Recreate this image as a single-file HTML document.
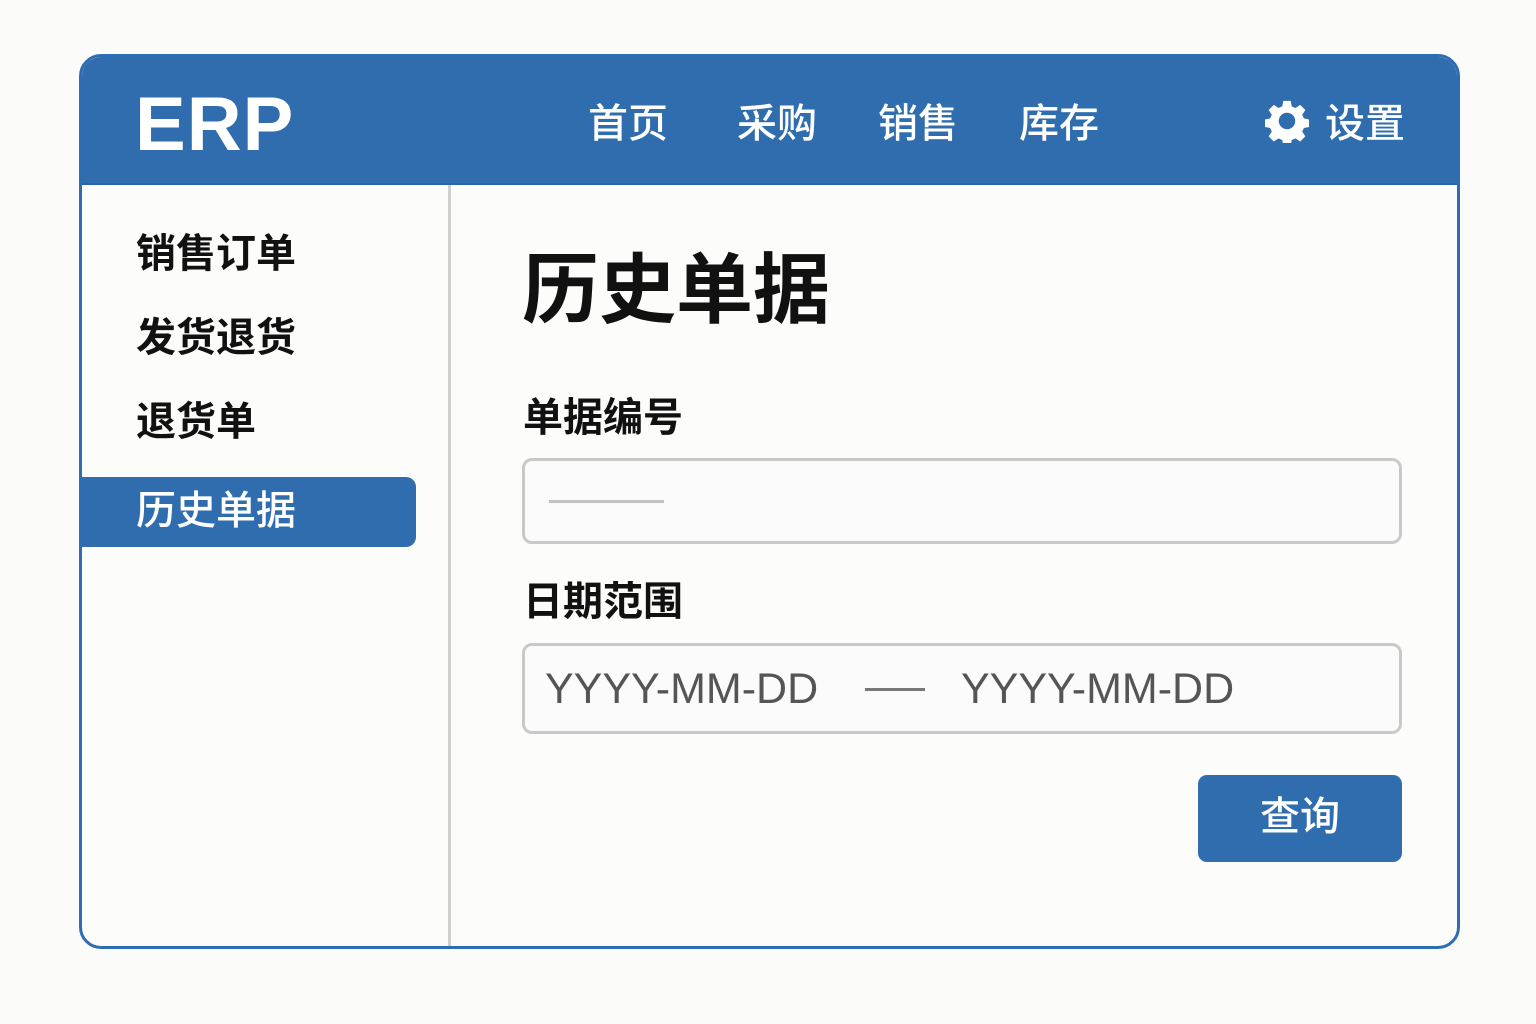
<!DOCTYPE html>
<html><head><meta charset="utf-8"><style>
*{margin:0;padding:0;box-sizing:border-box}
body{width:1536px;height:1024px;background:#fbfbfa;font-family:"Liberation Sans","Noto Sans CJK SC",sans-serif;position:relative;overflow:hidden}
.card{position:absolute;left:79px;top:54px;width:1381px;height:895px;border:3px solid #2e6db3;border-radius:22px;background:#fcfcfb;overflow:hidden}
.hdr{position:absolute;left:0;top:0;width:100%;height:128px;background:#2f6dae;border-bottom:2px solid #2766ad}
.logo{position:absolute;left:53px;top:24px;font-size:76px;font-weight:bold;color:#fff;letter-spacing:1px}
.nav{position:absolute;top:34px;font-size:40px;color:#fff;font-weight:500}
.side{position:absolute;left:0;top:128px;width:369px;bottom:0;border-right:3px solid #cfcfcf}
.si{position:absolute;left:54px;font-size:40px;font-weight:bold;color:#111}
.act{position:absolute;left:0;top:292px;width:334px;height:70px;background:#2f6dae;border-radius:0 10px 10px 0;color:#fff;font-size:40px;padding-left:54px;line-height:68px;font-weight:500}
.abs{position:absolute}
</style></head><body>
<div class="card">
 <div class="hdr">
  <div class="logo">ERP</div>
  <div class="nav" style="left:506px">首页</div>
  <div class="nav" style="left:655px">采购</div>
  <div class="nav" style="left:796px">销售</div>
  <div class="nav" style="left:937px">库存</div>
  <svg class="abs" style="left:1183px;top:42px" width="44" height="44" viewBox="0 0 24 24"><path fill="#fff" fill-rule="evenodd" d="M10 1h4l.6 3 2 .9 2.6-1.7 2.8 2.8-1.7 2.6.9 2 3 .6v4l-3 .6-.9 2 1.7 2.6-2.8 2.8-2.6-1.7-2 .9-.6 3h-4l-.6-3-2-.9-2.6 1.7-2.8-2.8 1.7-2.6-.9-2-3-.6v-4l3-.6.9-2-1.7-2.6 2.8-2.8 2.6 1.7 2-.9zM12 7.5a4.5 4.5 0 1 0 0 9 4.5 4.5 0 1 0 0-9z"/></svg>
  <div class="nav" style="left:1243px">设置</div>
 </div>
 <div class="side">
  <div class="si" style="top:36px">销售订单</div>
  <div class="si" style="top:120px">发货退货</div>
  <div class="si" style="top:204px">退货单</div>
  <div class="act">历史单据</div>
 </div>
 <div class="abs" style="left:440px;top:172px;font-size:77px;font-weight:bold;color:#111">历史单据</div>
 <div class="abs" style="left:441px;top:328px;font-size:40px;font-weight:bold;color:#111">单据编号</div>
 <div class="abs" style="left:440px;top:401px;width:880px;height:86px;border:3px solid #c9c9c9;border-radius:10px;background:#fbfbfb"><div class="abs" style="left:24px;top:39px;width:115px;height:3px;background:#c2c2c2"></div></div>
 <div class="abs" style="left:441px;top:512px;font-size:40px;font-weight:bold;color:#111">日期范围</div>
 <div class="abs" style="left:440px;top:586px;width:880px;height:91px;border:3px solid #c9c9c9;border-radius:10px;background:#fbfbfb">
  <div class="abs" style="left:20px;top:19px;font-size:43px;color:#555">YYYY-MM-DD</div>
  <div class="abs" style="left:340px;top:42px;width:60px;height:3px;background:#777"></div>
  <div class="abs" style="left:436px;top:19px;font-size:43px;color:#555">YYYY-MM-DD</div>
 </div>
 <div class="abs" style="left:1116px;top:718px;width:204px;height:87px;background:#2f6dae;border-radius:9px;color:#fff;font-size:40px;text-align:center;line-height:84px;font-weight:500">查询</div>
</div>
</body></html>
